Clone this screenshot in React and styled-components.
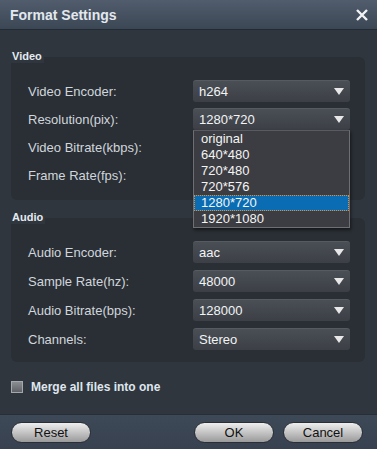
import React from 'react';
import styled, { createGlobalStyle } from 'styled-components';

const GlobalStyle = createGlobalStyle`
  html, body {
    margin: 0;
    padding: 0;
    background: #30363e;
  }
  * {
    box-sizing: border-box;
  }
`;

const Dialog = styled.div`
  width: 377px;
  height: 449px;
  display: flex;
  flex-direction: column;
  background: #30363e;
  font-family: 'Liberation Sans', Arial, sans-serif;
  color: #d4dae0;
  overflow: hidden;
`;

const TitleBar = styled.div`
  height: 30px;
  display: flex;
  align-items: center;
  justify-content: space-between;
  padding: 0 9px 0 10px;
  background: linear-gradient(#515d6c, #3c4756);
  border-bottom: 1px solid #222a33;
`;

const Title = styled.div`
  font-size: 14px;
  font-weight: bold;
  color: #e2e8ee;
`;

const CloseButton = styled.div`
  width: 12px;
  height: 12px;
  display: flex;
`;

const Body = styled.div`
  flex: 1;
  padding: 20px 12px 0 11px;
  display: flex;
  flex-direction: column;
`;

const Section = styled.div`
  display: flex;
  flex-direction: column;
  margin-bottom: ${props => props.mb || '0'};
`;

const Legend = styled.div`
  position: relative;
  z-index: 1;
  width: fit-content;
  height: 13px;
  line-height: 13px;
  padding: 0 2px 0 1px;
  margin-bottom: -6px;
  background: #30363e;
  font-size: 11px;
  font-weight: bold;
  color: #e4eaf0;
`;

const Box = styled.div`
  position: relative;
  background: #2a2f35;
  border-radius: 6px;
  padding: 23px 15px ${props => props.pb} 17px;
  display: flex;
  flex-direction: column;
  gap: ${props => props.gap};
`;

const Row = styled.div`
  display: flex;
  align-items: center;
  height: 22px;
  position: relative;
`;

const Label = styled.div`
  width: 165px;
  font-size: 13px;
  color: #d0d6dc;
`;

const Select = styled.div`
  width: 157px;
  height: 22px;
  border-radius: 3px;
  background: linear-gradient(#4a4e55, #3c4046);
  border-top: 1px solid #565a61;
  display: flex;
  align-items: center;
  justify-content: space-between;
  padding: 0 6px 0 6px;
  font-size: 13px;
  color: #f2f4f6;
`;

const Arrow = styled.div`
  width: 0;
  height: 0;
  border-left: 5px solid transparent;
  border-right: 5px solid transparent;
  border-top: 7px solid #e8e8e8;
`;

const List = styled.div`
  position: absolute;
  left: 165px;
  top: 22px;
  width: 157px;
  z-index: 5;
  background: #3c3d42;
  border: 1px solid #6e6f73;
  border-top: 1px solid #5a5b60;
  box-shadow: 1px 2px 3px rgba(0, 0, 0, 0.5);
`;

const Option = styled.div`
  height: 16px;
  padding-left: ${props => (props.active ? '6px' : '7px')};
  font-size: 13px;
  color: #f4f4f4;
  background: ${props => (props.active ? '#0a6db3' : 'transparent')};
  border: ${props => (props.active ? '1px dotted #f08a24' : 'none')};
  line-height: ${props => (props.active ? '14px' : '16px')};
`;

const MergeRow = styled.div`
  display: flex;
  align-items: center;
  gap: 8px;
  margin-top: 18px;
`;

const Checkbox = styled.div`
  width: 12px;
  height: 12px;
  border: 1px solid #a4a8ad;
  background: linear-gradient(#8a8d92, #5e6166);
`;

const MergeText = styled.div`
  font-size: 12px;
  font-weight: bold;
  color: #dfe6ee;
`;

const Footer = styled.div`
  height: 35px;
  display: flex;
  align-items: center;
  padding: 0 14px 0 11px;
  background: linear-gradient(#3e4958, #37414f);
  border-top: 1px solid #262e38;
`;

const Button = styled.div`
  width: 80px;
  height: 21px;
  border-radius: 11px;
  background: linear-gradient(#eeeeee, #c4c4c4 50%, #9a9a9a);
  border: 1px solid #2a2f36;
  display: flex;
  align-items: center;
  justify-content: center;
  font-size: 13px;
  color: #111;
  margin-left: ${props => props.ml || '0'};
`;

const videoRows = [
  { label: 'Video Encoder:', value: 'h264' },
  { label: 'Resolution(pix):', value: '1280*720', open: true },
  { label: 'Video Bitrate(kbps):' },
  { label: 'Frame Rate(fps):' },
];

const audioRows = [
  { label: 'Audio Encoder:', value: 'aac' },
  { label: 'Sample Rate(hz):', value: '48000' },
  { label: 'Audio Bitrate(bps):', value: '128000' },
  { label: 'Channels:', value: 'Stereo' },
];

const resolutions = ['original', '640*480', '720*480', '720*576', '1280*720', '1920*1080'];

function SettingRow({ label, value, open }) {
  return (
    <Row>
      <Label>{label}</Label>
      {value && (
        <Select>
          <span>{value}</span>
          <Arrow />
        </Select>
      )}
      {open && (
        <List>
          {resolutions.map(r => (
            <Option key={r} active={r === value}>{r}</Option>
          ))}
        </List>
      )}
    </Row>
  );
}

export default function App() {
  return (
    <Dialog>
      <GlobalStyle />
      <TitleBar>
        <Title>Format Settings</Title>
        <CloseButton>
          <svg width="12" height="12" viewBox="0 0 12 12">
            <path d="M1 1L11 11M11 1L1 11" stroke="#f0f2f4" strokeWidth="2.4" />
          </svg>
        </CloseButton>
      </TitleBar>
      <Body>
        <Section mb="11px">
          <Legend>Video</Legend>
          <Box gap="6px" pb="14px">
            {videoRows.map(r => <SettingRow key={r.label} {...r} />)}
          </Box>
        </Section>
        <Section>
          <Legend>Audio</Legend>
          <Box gap="7px" pb="12px">
            {audioRows.map(r => <SettingRow key={r.label} {...r} />)}
          </Box>
        </Section>
        <MergeRow>
          <Checkbox />
          <MergeText>Merge all files into one</MergeText>
        </MergeRow>
      </Body>
      <Footer>
        <Button>Reset</Button>
        <Button ml="auto">OK</Button>
        <Button ml="9px">Cancel</Button>
      </Footer>
    </Dialog>
  );
}
